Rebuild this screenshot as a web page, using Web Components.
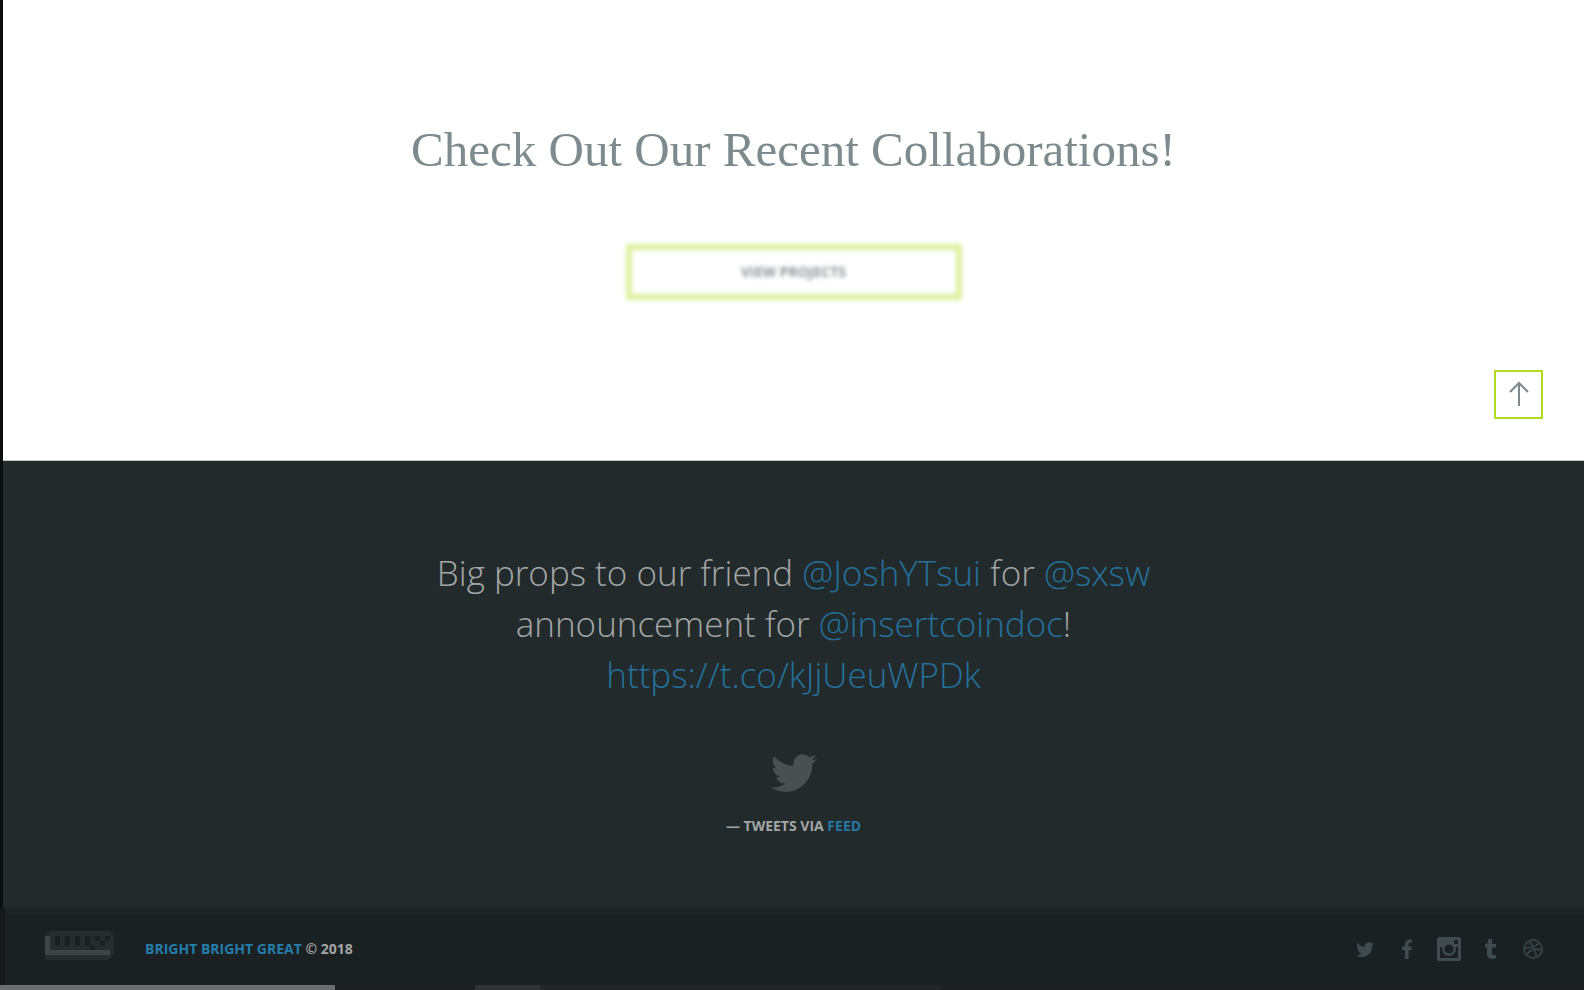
<!DOCTYPE html>
<html lang="en">
<head>
<meta charset="utf-8">
<title>Bright Bright Great</title>
<style>
body { margin: 0; background: #1c2021; font-family: "Open Sans", sans-serif; }
</style>
</head>
<body>
<site-page>
  <collab-section></collab-section>
  <tweet-section></tweet-section>
  <site-footer slot="footer"></site-footer>
</site-page>
<script>
const define = (name, html) => customElements.define(name, class extends HTMLElement {
  constructor() {
    super();
    this.attachShadow({ mode: "open" }).innerHTML = html;
  }
});

define("site-page", `
<style>
:host { display: flex; flex-direction: column; min-height: 100vh; }
main { border-left: 3px solid #0c0d0d; }
.foot { flex: 1; display: flex; flex-direction: column; }
</style>
<main><slot></slot></main>
<div class="foot"><slot name="footer"></slot></div>`);

define("outline-button", `
<style>
:host { display: block; }
button { display: block; box-sizing: border-box; width: 336px; height: 56px; margin: 0 auto; padding: 0;
  background: #fff; border: 6px solid #dff09f; color: #8b9193; filter: blur(2px);
  font: 700 14px/16px "Open Sans", sans-serif; text-transform: uppercase; }
</style>
<button type="button"><slot></slot></button>`);

define("top-link", `
<style>
:host { display: block; }
a { display: flex; align-items: center; justify-content: center; box-sizing: border-box;
  width: 49px; height: 49px; border: 2px solid #b0dc1c; background: #fff; }
svg { display: block; }
</style>
<a href="#top" aria-label="Back to top"><svg width="22" height="28" viewBox="0 0 22 28" fill="none" stroke="#7f888c" stroke-width="2"><path d="M11 25V2M2 11l9-9 9 9"/></svg></a>`);

define("collab-section", `
<style>
:host { display: block; position: relative; background: #fff; border-bottom: 1px solid #c4c7c7; padding: 120px 40px 160px; }
h1 { margin: 0 0 64px; text-align: center; color: #7d8a8e; font: 400 49px/60px "Liberation Serif", serif; }
top-link { position: absolute; right: 41px; bottom: 41px; }
</style>
<h1>Check Out Our Recent Collaborations!</h1>
<outline-button>View Projects</outline-button>
<top-link></top-link>`);

define("tweet-section", `
<style>
:host { display: block; background: #232a2c; padding: 86px 40px 72px; text-align: center; color: #a3a6a6; }
a { color: #24719b; text-decoration: none; }
blockquote { margin: 0 auto; max-width: 760px; font: 300 35px/51px "Open Sans", sans-serif; }
svg { display: block; margin: 50px auto 20px; fill: #495052; }
p { margin: 0; font: 700 14px/20px "Open Sans", sans-serif; text-transform: uppercase; }
p a { color: #2677a3; }
</style>
<blockquote>Big props to our friend <a href="#josh">@JoshYTsui</a> for <a href="#sxsw">@sxsw</a><br>announcement for <a href="#coin">@insertcoindoc</a>!<br><a href="#link">https://t.co/kJjUeuWPDk</a></blockquote>
<svg width="46" height="46" viewBox="0 0 24 24"><path d="M23.95 4.57a10 10 0 0 1-2.82.77 4.96 4.96 0 0 0 2.16-2.72c-.95.55-2 .95-3.13 1.18a4.92 4.92 0 0 0-8.38 4.48C7.69 8.09 4.07 6.13 1.64 3.16a4.82 4.82 0 0 0-.67 2.48c0 1.71.87 3.21 2.19 4.1a4.9 4.9 0 0 1-2.23-.62v.06a4.92 4.92 0 0 0 3.95 4.83 5 5 0 0 1-2.21.08 4.94 4.94 0 0 0 4.6 3.42A9.87 9.87 0 0 1 0 19.54a13.99 13.99 0 0 0 7.55 2.21c9.05 0 14-7.5 14-13.98 0-.21 0-.42-.02-.63a9.94 9.94 0 0 0 2.46-2.55z"/></svg>
<p><span>— Tweets via <a href="#feed">Feed</a></span></p>`);

define("social-links", `
<style>
:host { display: flex; align-items: center; gap: 18px; }
a { display: flex; }
svg { display: block; fill: #3f4b4e; }
</style>
<a href="#twitter" aria-label="Twitter"><svg width="24" height="24" viewBox="0 0 24 24"><path d="M21 7a8 8 0 0 1-2 .6A3.500 3.500 0 0 0 20.500 5.600a8 8 0 0 1-2.300.9 3.700 3.700 0 0 0-6.300 3.300C8.900 9.700 6.200 8.200 4.400 6a3.700 3.700 0 0 0 1.100 4.900 3.600 3.600 0 0 1-1.600-.5c0 1.800 1.200 3.300 2.900 3.700a4 4 0 0 1-1.600 0 3.700 3.700 0 0 0 3.400 2.500A7.500 7.500 0 0 1 3 18.200 10.400 10.400 0 0 0 19.100 8.900 7 7 0 0 0 21 7z"/></svg></a>
<a href="#facebook" aria-label="Facebook"><svg width="24" height="24" viewBox="0 0 24 24"><path d="M10 22v-9H7V9.500h3V7c0-3 1.700-4.500 4.300-4.500L17 2.700v3h-1.700c-1.400 0-1.700.7-1.700 1.700v2.100H17l-.5 3.500h-2.900v9z"/></svg></a>
<a href="#instagram" aria-label="Instagram"><svg width="24" height="24" viewBox="0 0 24 24"><path fill-rule="evenodd" d="M2 0h20a2 2 0 0 1 2 2v20a2 2 0 0 1-2 2H2a2 2 0 0 1-2-2V2a2 2 0 0 1 2-2zm15 3v4h4V3zM3 10v11h18V10h-2.300a7 7 0 1 1-13.400 0zm9-2.500a4.500 4.500 0 1 0 0 9 4.500 4.500 0 0 0 0-9z"/></svg></a>
<a href="#tumblr" aria-label="Tumblr"><svg width="24" height="24" viewBox="0 0 24 24"><path d="M9.500 2H13v5h4v3.500h-4V16c0 2.300 1.600 2.700 4 1.500V21c-1.200.7-2.500 1-4 1-3.300 0-5-1.800-5-5v-6.500H6V7.800c2.200-.8 3.200-2.500 3.500-5.800z"/></svg></a>
<a href="#dribbble" aria-label="Dribbble"><svg width="24" height="24" viewBox="0 0 24 24"><g fill="none" stroke="#354042" stroke-width="2"><circle cx="12" cy="12" r="9"/><path d="M8 4c4 4 6 9 7.500 16M3 11c7 0 12-1 15-5M6 18c3-6 8-7 15-5"/></g></svg></a>`);

define("site-footer", `
<style>
:host { flex: 1; display: flex; flex-direction: column; background: #1b2022; border-left: 5px solid #151919; }
.row { flex: 1; display: flex; align-items: center; padding: 0 39px 0 40px; border-top: 5px solid #1e2426; }
.logo { display: block; margin: 0 31px 8px 0; }
p { margin: 0; flex: 1; font: 700 14px/20px "Open Sans", sans-serif; color: #a3a6a6; text-transform: uppercase; }
p a { color: #247dab; text-decoration: none; }
.strip { display: flex; height: 5px; margin-left: -5px; background: #1c2021; }
.a { flex: 0 0 335px; background: #6b6d6e; }
.b { flex: 0 0 140px; background: #1d2021; }
.c { flex: 0 0 65px; background: #303334; }
.d { flex: 0 0 400px; background: #232627; }
</style>
<div class="row">
<svg class="logo" width="69" height="29" viewBox="0 0 69 29" role="img" aria-label="BBG"><path fill="#272c2e" d="M5 0h60l4 5v18l-5 6H0V5z"/><path fill="#3f4547" d="M0 5h5v14h60v5H0z"/><path fill="#1b2022" d="M10 5h5v10h-5zM20 5h5v10h-5zM30 5h5v10h-5zM40 5h5v10h-5zM50 5h5v5h-5zM60 5h5v5h-5zM55 10h5v5h-5zM45 14h5v5h-5z"/></svg>
<p><a href="#home">Bright Bright Great</a> © 2018</p>
<social-links></social-links>
</div>
<div class="strip"><i class="a"></i><i class="b"></i><i class="c"></i><i class="d"></i></div>`);
</script>
</body>
</html>
